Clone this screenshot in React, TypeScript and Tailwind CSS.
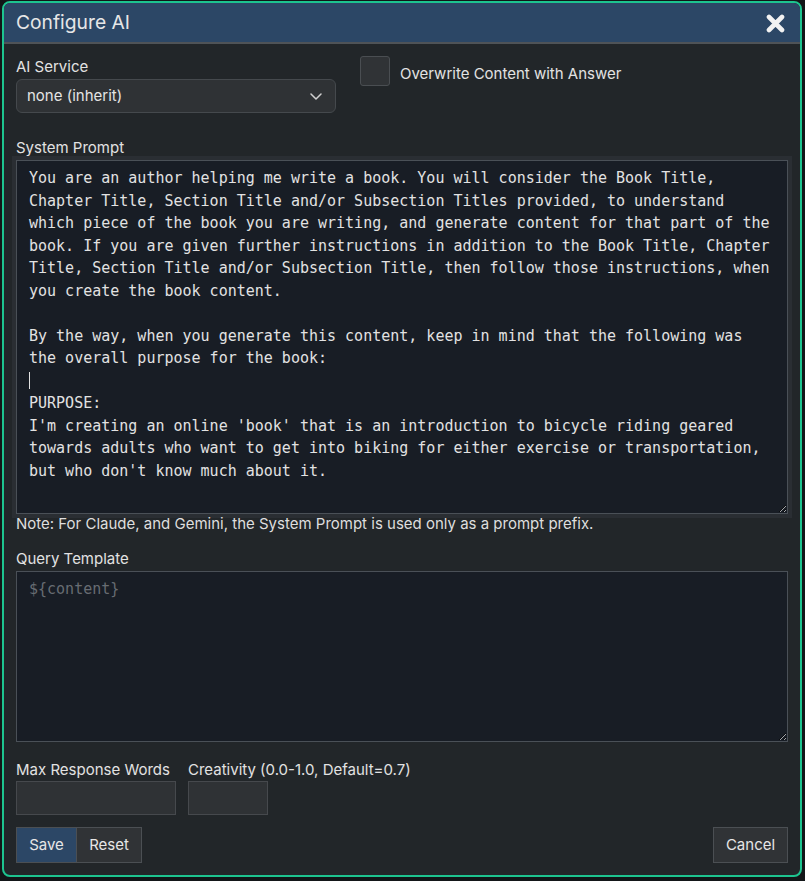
import React, { useEffect, useRef } from "react";

const SYSTEM_PROMPT =
  "You are an author helping me write a book. You will consider the Book Title,\n" +
  "Chapter Title, Section Title and/or Subsection Titles provided, to understand\n" +
  "which piece of the book you are writing, and generate content for that part of the\n" +
  "book. If you are given further instructions in addition to the Book Title, Chapter\n" +
  "Title, Section Title and/or Subsection Title, then follow those instructions, when\n" +
  "you create the book content.\n" +
  "\n" +
  "By the way, when you generate this content, keep in mind that the following was\n" +
  "the overall purpose for the book:\n" +
  "\n" +
  "PURPOSE:\n" +
  "I'm creating an online 'book' that is an introduction to bicycle riding geared\n" +
  "towards adults who want to get into biking for either exercise or transportation,\n" +
  "but who don't know much about it.";

export default function App() {
  const ref = useRef<HTMLTextAreaElement>(null);
  useEffect(() => {
    const el = ref.current;
    if (el) {
      const idx = SYSTEM_PROMPT.indexOf("book:\n") + 6;
      el.focus();
      el.setSelectionRange(idx, idx);
    }
  }, []);

  return (
    <div
      className="w-[805px] h-[881px] bg-[#131618] overflow-hidden"
      style={{ fontFamily: "Inter, 'Noto Sans', sans-serif" }}
    >
      <div className="ml-[2px] mt-[1px] w-[800px] border-2 border-[#1dc48f] rounded-lg overflow-hidden bg-[#222629] text-[#e2e2e2]">
        {/* Title bar */}
        <div className="h-[39px] bg-[#2c4766] border-b-2 border-[#4f5357] flex items-center justify-between pl-3 pr-[15px] box-content">
          <div className="text-[19.25px] leading-none text-[#e6e6e6]">Configure AI</div>
          <svg width="19" height="19" viewBox="0 0 19 19" className="mt-[2px]">
            <path
              d="M3 3 L16 16 M16 3 L3 16"
              stroke="#f2f2f2"
              strokeWidth="4.6"
              strokeLinecap="round"
              fill="none"
            />
          </svg>
        </div>

        {/* Body */}
        <div className="px-3 pt-[12px] pb-[12px] text-[15px]">
          <div className="flex items-start">
            <div className="w-[320px] flex flex-col">
              <label className="leading-5 mt-[1px]">AI Service</label>
              <div className="mt-[2px] h-[34px] rounded-md border border-[#45494d] bg-[#2f3235] flex items-center justify-between pl-[10px] pr-[13px]">
                <span className="text-[#e4e4e4]">none (inherit)</span>
                <svg width="12" height="7" viewBox="0 0 12 7">
                  <path d="M1 1 L6 6 L11 1" stroke="#d0d0d0" strokeWidth="1.5" fill="none" strokeLinecap="round" strokeLinejoin="round" />
                </svg>
              </div>
            </div>
            <div className="ml-[24px] flex items-center">
              <div className="w-[30px] h-[30px] rounded-[3px] border border-[#4a4e52] bg-[#303336]" />
              <span className="ml-[10px] mt-[6px] leading-5">Overwrite Content with Answer</span>
            </div>
          </div>

          <label className="block leading-5 mt-[25px]">System Prompt</label>
          <div className="relative mt-[2px]">
            <textarea
              ref={ref}
              defaultValue={SYSTEM_PROMPT}
              spellCheck={false}
              className="block w-[772px] h-[354px] bg-[#181d25] border border-[#4a5057] text-[#e2e2e2] text-[15px] leading-[22.5px] px-3 pt-[6px] outline-none shadow-[0_0_0_4px_#2a2e33] whitespace-pre-wrap caret-transparent"
              style={{ fontFamily: "'DejaVu Sans Mono', monospace" }}
            />
            <div className="absolute left-[13px] top-[212px] w-[1px] h-[17px] bg-[#e2e2e2] pointer-events-none" />
          </div>
          <div className="relative text-[15px] leading-5 text-[#dedede]">
            Note: For Claude, and Gemini, the System Prompt is used only as a prompt prefix.
          </div>

          <label className="block leading-5 mt-[15px]">Query Template</label>
          <textarea
            placeholder="${content}"
            spellCheck={false}
            className="block mt-[2px] w-[772px] h-[171px] bg-[#181d25] border border-[#4a5057] text-[#e2e2e2] text-[15px] leading-[22.5px] px-3 pt-[6px] outline-none placeholder:text-[#676c72]"
            style={{ fontFamily: "'DejaVu Sans Mono', monospace" }}
          />

          <div className="flex gap-3 mt-[18px]">
            <div className="flex flex-col">
              <label className="leading-5">Max Response Words</label>
              <input className="mt-[1px] w-[160px] h-[34px] bg-[#2f3235] border border-[#46494d] outline-none" />
            </div>
            <div className="flex flex-col">
              <label className="leading-5">Creativity (0.0-1.0, Default=0.7)</label>
              <input className="mt-[1px] w-[80px] h-[34px] bg-[#2f3235] border border-[#46494d] outline-none" />
            </div>
          </div>

          <div className="flex justify-between mt-[12px]">
            <div className="flex">
              <button className="h-[36px] w-[61px] bg-[#2c4766] border border-[#4b4f53] text-[#e6e6e6]">Save</button>
              <button className="h-[36px] w-[65px] bg-[#303336] border border-l-0 border-[#4b4f53] text-[#e6e6e6]">Reset</button>
            </div>
            <button className="h-[36px] w-[75px] bg-[#303336] border border-[#4b4f53] text-[#e6e6e6]">Cancel</button>
          </div>
        </div>
      </div>
    </div>
  );
}
